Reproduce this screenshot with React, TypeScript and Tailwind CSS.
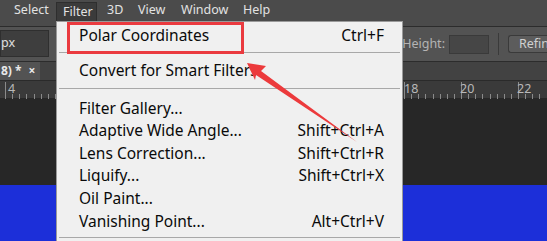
import React from "react";

const menuItems: { label: string; sc?: string }[] = [
  { label: "Filter Gallery..." },
  { label: "Adaptive Wide Angle...", sc: "Shift+Ctrl+A" },
  { label: "Lens Correction...", sc: "Shift+Ctrl+R" },
  { label: "Liquify...", sc: "Shift+Ctrl+X" },
  { label: "Oil Paint..." },
  { label: "Vanishing Point...", sc: "Alt+Ctrl+V" },
];

function Row({ label, sc }: { label: string; sc?: string }) {
  return (
    <div className="flex h-[22.6px] items-center justify-between pl-[22px] pr-[18px]">
      <span>{label}</span>
      {sc && <span>{sc}</span>}
    </div>
  );
}

function Ruler() {
  const ticks: number[] = [];
  for (let x = 5; x < 547; x += 7.125) ticks.push(x);
  return (
    <div className="relative h-[18px] bg-[#3a3a3a] border-t border-[#2a2a2a]">
      <svg className="absolute inset-0" width="547" height="18">
        {ticks.map((x, i) => (
          <line
            key={i}
            x1={Math.round(x) + 0.5}
            x2={Math.round(x) + 0.5}
            y1={i % 8 === 0 ? 1 : 13}
            y2={18}
            stroke="#8a8a8a"
            strokeWidth="1"
          />
        ))}
      </svg>
      <span className="absolute left-[8px] top-[1px] text-[12.5px] leading-[13px] text-[#b8b8b8]">4</span>
      <span className="absolute left-[404px] top-[1px] text-[12.5px] leading-[13px] text-[#b8b8b8]">18</span>
      <span className="absolute left-[460px] top-[1px] text-[12.5px] leading-[13px] text-[#b8b8b8]">20</span>
      <span className="absolute left-[517px] top-[1px] text-[12.5px] leading-[13px] text-[#b8b8b8]">22</span>
    </div>
  );
}

export default function App() {
  return (
    <div
      className="relative w-[547px] h-[241px] overflow-hidden bg-[#282828]"
      style={{ fontFamily: '"Noto Sans", "Liberation Sans", sans-serif' }}
    >
      {/* Menu bar */}
      <div className="flex h-[27px] items-start bg-[#4b4b4b] border-b border-[#2c2c2c] text-[12.5px] text-[#e2e2e2]">
        <div className="flex h-[21px] items-center">
          <span className="w-[56px] pl-[14px]">Select</span>
          <span className="flex h-[19px] w-[41px] mt-[2px] items-center bg-[#3b3b3b] border border-b-0 border-[#2e2e2e] pl-[6px]">Filter</span>
          <span className="w-[31px] pl-[10px]">3D</span>
          <span className="w-[43px] pl-[10px]">View</span>
          <span className="w-[62px] pl-[10px]">Window</span>
          <span className="pl-[10px]">Help</span>
        </div>
      </div>
      {/* Options bar */}
      <div className="flex h-[35px] items-center bg-[#535353] border-b border-[#2c2c2c] text-[12.5px] text-[#b4b4b4]">
        <div className="flex h-[27px] w-[49px] items-center bg-[#3e3e3e] border border-[#2f2f2f] text-[#e0e0e0] -mt-[2px]">px</div>
        <div className="flex-1" />
        <span className="mr-[4px]">Height:</span>
        <div className="h-[19px] w-[40px] bg-[#464646] border border-[#3a3a3a]" />
        <div className="mx-[9px] h-[22px] w-px bg-[#3a3a3a]" />
        <div className="flex h-[18px] w-[39px] items-center rounded-l-[3px] bg-[#5c5c5c] border border-r-0 border-[#3a3a3a] pl-[10px] whitespace-nowrap text-[#d0d0d0]">Refin</div>
      </div>
      {/* Tabs */}
      <div className="flex h-[18px] bg-[#424242]">
        <div className="flex w-[40px] items-center bg-[#535353] text-[12px] font-bold text-[#e8e8e8] pl-[1px]">
          <span>8) *</span>
          <span className="ml-[7px] text-[12px]">×</span>
        </div>
      </div>
      <Ruler />
      <div className="h-[87px] bg-[#272727]" />
      <div className="h-[60px] bg-[#1c2fd9]" />

      {/* Filter menu */}
      <div className="absolute left-[56px] top-[21px] w-[347px] h-[230px] bg-[#f0f0f0] border border-[#9a9a9a] text-[15.5px] text-[#0a0a0a] pt-[2px]">
        <div className="flex h-[23px] items-center justify-between pl-[22px] pr-[18px]">
          <span>Polar Coordinates</span>
          <span>Ctrl+F</span>
        </div>
        <div className="h-[12px] pt-[5px] px-[2px]"><div className="h-px bg-[#a8a8a8]" /></div>
        <div className="flex h-[23px] items-center pl-[22px]">
          <span>Convert for Smart Filters</span>
        </div>
        <div className="h-[15px] pt-[6px] px-[2px]"><div className="h-px bg-[#a8a8a8]" /></div>
        {menuItems.map((m) => (
          <Row key={m.label} label={m.label} sc={m.sc} />
        ))}
        <div className="h-[10px] pt-[4px] px-[2px]"><div className="h-px bg-[#a8a8a8]" /></div>
      </div>

      {/* Red highlight box */}
      <div className="absolute left-[67px] top-[22px] w-[177px] h-[32px] border-[3px] border-[#ea3a3f]" />

      {/* Red arrow */}
      <svg className="absolute left-0 top-0" width="547" height="241">
        <polygon points="247,63 266,66 261,71 357,142 256,75 255,80" fill="#ec3a3c" />
      </svg>
    </div>
  );
}
